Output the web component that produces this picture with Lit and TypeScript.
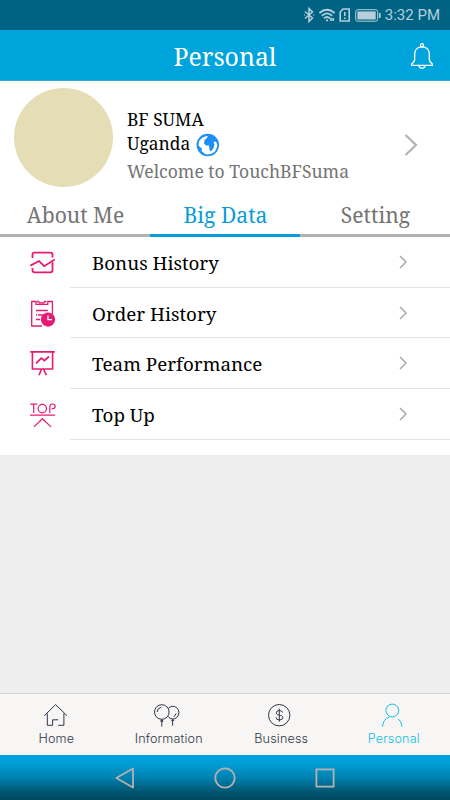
import { LitElement, html, css, svg } from "lit";
import { customElement, state } from "lit/decorators.js";
import { classMap } from "lit/directives/class-map.js";

const menu = [
  {
    label: "Bonus History", cls: "w-bonus",
    icon: svg`<g stroke-width="1.8"><path d="M4.5 9V5.6Q4.5 3.7 6.4 3.7H22.6Q24.5 3.7 24.5 5.6V8.6M24.5 13.2V21.3Q24.5 23.3 22.5 23.3H6.5Q4.5 23.3 4.5 21.3V19"/><path d="M2.4 16.6L11 12L16.2 17.2L26.7 10.5"/></g>`,
  },
  {
    label: "Order History", cls: "w-order",
    icon: svg`<g stroke-width="1.3"><path d="M14 26H3.7V1.5H8V4.4H19.8V1.5H24.4V14M9 1.5H10.6L11.6 2.8H15.8L16.8 1.5H18.4"/><path d="M8 10.5H19.8M10 15H15M8 15H9M8 19.5H12"/></g><circle cx="20" cy="19.6" r="7.1" fill="currentColor" stroke="none"/><path d="M20 15.4V19.7H24" stroke="#fff" stroke-width="1.3"/>`,
  },
  {
    label: "Team Performance", cls: "w-team",
    icon: svg`<path stroke-width="1.6" d="M2.2 1.9H26.8M4.4 2.4V19H24.6V2.4M13.4 19.5L11 25.2M15.6 19.5L18.4 25.2"/><path stroke-width="1.7" d="M8 13.4L13.3 8.1L16.4 10.6L21 6.5"/>`,
  },
  {
    label: "Top Up", cls: "w-top",
    icon: svg`<g stroke-width="1.2"><path d="M2.2 3.2H9.3M5.7 3.2V12M21.8 12V6Q21.8 3 24.6 3Q27.2 3 27.2 5.3T24.6 7.6H23.6M2 14.2H27.2M6 25.9L14.4 17.7L23 25.9"/><circle cx="14.3" cy="7.6" r="4.2"/></g>`,
  },
];

const navItems = [
  {
    label: "Home", cls: "n-home",
    icon: svg`<path d="M2.3 13.7L13.6 2.6L25 13.7M5.3 11.5V23.3H10.6V17.8H16.2M16.2 23.3H21.9V11.5"/>`,
  },
  {
    label: "Information", cls: "n-info",
    icon: svg`<circle cx="6.8" cy="10" r="7.3"/><path d="M13 7A6 6.4 0 1 1 13.2 14.6M6.8 17.7L5.5 19.2H8.1L6.8 17.7V24.6M17.6 17.3L16.6 18.5H18.8L17.6 17.3V23.7M2.2 10Q2.4 5.9 6.2 5.2M21 11.5Q20.5 14 18.5 14.7"/>`,
  },
  {
    label: "Business", cls: "n-biz",
    icon: svg`<circle cx="12.2" cy="13.2" r="10.7"/><path d="M15.5 10.5Q15.3 8.5 12.3 8.5Q9.3 8.5 9.3 10.8C9.3 14.1 15.8 12.2 15.8 15.6Q15.8 18 12.5 18Q9 18 9 15.4M12.3 6.7V19.7"/>`,
  },
  {
    label: "Personal", cls: "n-me",
    icon: svg`<circle cx="12.3" cy="8.5" r="6.4"/><path d="M2.6 24.6Q2.9 17.2 9.5 15M18.2 17Q21.9 19.4 21.9 24.6"/>`,
  },
];

@customElement("app-root")
export class AppRoot extends LitElement {
  @state() private tab = 1;

  static styles = css`
    :host {
      display: flex; flex-direction: column; height: 800px; width: 450px;
      background: #eee; overflow: hidden;
      font-family: "Noto Serif", "Droid Serif", "DejaVu Serif Condensed", "DejaVu Serif", serif;
      font-stretch: condensed;
    }
    * { box-sizing: border-box; }
    svg { display: block; fill: none; stroke: currentColor; flex: none; overflow: visible; }
    span { white-space: nowrap; }
    .status {
      height: 30px; background: #006384; color: #b5d0da; display: flex; align-items: center;
      justify-content: flex-end; padding: 0 10px 0 0; font: 15px/30px Roboto, sans-serif;
    }
    .status svg { margin-right: 4px; }
    .header {
      height: 51px; background: #00a4dd; border-bottom: 1px solid #34a9dc; color: #fff;
      display: grid; grid-template-columns: 1fr auto 1fr; align-items: center;
    }
    .title { grid-column: 2; font-size: 24.8px; line-height: 52px; }
    .bell { justify-self: end; margin-right: 16px; }
    .profile { height: 118px; background: #fff; display: flex; padding: 7px 31px 0 14px; }
    .avatar { width: 99px; height: 99px; border-radius: 50%; background: #e5ddb6; flex: none; }
    .who { flex: 1; margin-left: 14px; padding-top: 19px; font-size: 17.4px; color: #000; }
    .who div { display: flex; align-items: center; height: 24px; line-height: 24px; }
    .globe { margin: 3px 0 0 6px; stroke: none; }
    .who .welcome { margin-top: 4px; color: #747474; font-size: 17.55px; }
    .go { color: #b2b2b2; margin-top: 45px; }
    .tabs { height: 38px; display: grid; grid-template-columns: repeat(3, 1fr); background: #fff; }
    .tab {
      border-bottom: 3px solid #b2b2b2; color: #747474; text-align: center;
      font-size: 21.1px; line-height: 32px; padding-left: 1px;
    }
    .tab.on { color: #0a9bd8; border-color: #069fdc; }
    .list { height: 218px; background: #fff; }
    .row { height: 50.7px; display: flex; }
    .row > svg { margin: 12px 12px 0 28px; color: #e51b73; }
    .cell {
      flex: 1; display: flex; align-items: center; justify-content: space-between;
      border-bottom: 1px solid #e4e4e4; margin-left: 2px; padding: 2.5px 42px 0 22px;
      font-size: 18.8px; color: #000;
    }
    .cell svg { color: #aaa; margin-top: -2px; }
    .fill { flex: 1; }
    .nav {
      height: 62px; background: #f7f6f4; border-top: 1px solid #d6d6d6;
      display: grid; grid-template-columns: repeat(4, 1fr); color: #30364a;
      font: 300 12.6px/16px Inter, "Open Sans", sans-serif; letter-spacing: 0.15px;
    }
    .item { display: flex; flex-direction: column; align-items: center; padding-top: 8px; }
    .item span { margin-top: 2px; }
    .item.on { color: #13bee2; }
    .system {
      height: 45px; display: flex; justify-content: center; align-items: center; gap: 76px;
      background: linear-gradient(#00a3dd, #009dd5 20%, #0082b1 50%, #005875 80%, #00465f);
      color: #b5b1ae;
    }
  `;

  render() {
    return html`
      <div class="status">
        <svg width="12" height="16" viewBox="0 0 12 16" stroke-width="1.5"><path d="M2 4.5L9.5 11L6 14.5V1.5L9.5 5L2 11.5M1.3 8h.8M10.5 8h.8"/></svg>
        <svg width="16" height="14" viewBox="0 0 16 14" stroke-width="1.7"><path d="M.4 5Q8-1.5 15.6 5M2.8 7.8Q8 3 13.2 7.8M5 10.4Q8 7.6 11 10.4M12 10v3M14.2 13v-3"/><circle cx="8" cy="12.3" r="1.1" fill="currentColor" stroke="none"/></svg>
        <svg width="12" height="14" viewBox="0 0 12 14" stroke-width="1.6"><path d="M4 1H10.2V13H1.2V4ZM5.8 4V8M5.8 9.5V11"/></svg>
        <svg width="26" height="13" viewBox="0 0 26 13"><rect x=".7" y=".7" width="22" height="11.5" rx="2"/><path d="M24.8 4V9" stroke-width="1.6"/><rect x="2.4" y="2.4" width="18.3" height="8.1" fill="currentColor" stroke="none"/></svg>
        <span class="clock">3:32 PM</span>
      </div>
      <div class="header">
        <span class="title">Personal</span>
        <svg class="bell" width="24" height="28" viewBox="0 0 24 28" stroke-width="1.3"><circle cx="12" cy="3.2" r="1.5"/><path d="M12 4.8C7.2 4.8 4.7 8 4.7 12V17Q4.7 20 1.6 22V23.4H22.4V22Q19.3 20 19.3 17V12C19.3 8 16.8 4.8 12 4.8ZM9 23.8Q9.5 26.2 12 26.2T15 23.8"/></svg>
      </div>
      <div class="profile">
        <div class="avatar"></div>
        <div class="who">
          <div><span class="name">BF SUMA</span></div>
          <div><span class="country">Uganda</span>
            <svg class="globe" width="24" height="24" viewBox="0 0 24 24"><circle cx="11.8" cy="12" r="11.2" fill="#1e90f5"/><path fill="#fff" d="M3 8L6 5L9 3.5L12 3L10.5 5.5L8.5 7L8 10.5L10 12.5L13 12.5L13.5 17L15 18.5L17.5 15L18.5 11.5L17.5 9L20 8.5L21.3 12Q21 17 17 20Q12 22.5 8.5 20.5L5.5 18L6 15.5L4 14L2.6 12.5Z"/></svg>
          </div>
          <div class="welcome"><span>Welcome to TouchBFSuma</span></div>
        </div>
        <svg class="go" width="16" height="24" viewBox="0 0 16 24" stroke-width="2.2"><path d="M2.5 2L13 12L2.5 22"/></svg>
      </div>
      <div class="tabs">
        ${["About Me", "Big Data", "Setting"].map((t, i) => html`
          <div class=${classMap({ tab: true, on: this.tab === i })} @click=${() => (this.tab = i)}><span>${t}</span></div>`)}
      </div>
      <div class="list">
        ${menu.map((m) => html`
          <div class="row">
            <svg width="28" height="28" viewBox="0 0 28 28">${m.icon}</svg>
            <div class="cell"><span class=${m.cls}>${m.label}</span>
              <svg width="10" height="14" viewBox="0 0 10 14" stroke-width="1.5"><path d="M2 1L8 7L2 13"/></svg>
            </div>
          </div>`)}
      </div>
      <div class="fill"></div>
      <div class="nav">
        ${navItems.map((n, i) => html`
          <div class=${classMap({ item: true, on: i === 3 })}>
            <svg width="28" height="27" viewBox="0 0 28 27" stroke-width="1">${n.icon}</svg>
            <span class=${n.cls}>${n.label}</span>
          </div>`)}
      </div>
      <div class="system">
        <svg width="24" height="24" viewBox="0 0 24 24" stroke-width="1.8" stroke-linejoin="round"><path d="M20 2.5V21.5L3.3 12Z"/></svg>
        <svg width="24" height="24" viewBox="0 0 24 24" stroke-width="1.8"><circle cx="12" cy="12" r="9.7"/></svg>
        <svg width="24" height="24" viewBox="0 0 24 24" stroke-width="1.8"><rect x="3.4" y="3.4" width="17.2" height="17.2"/></svg>
      </div>
    `;
  }
}
